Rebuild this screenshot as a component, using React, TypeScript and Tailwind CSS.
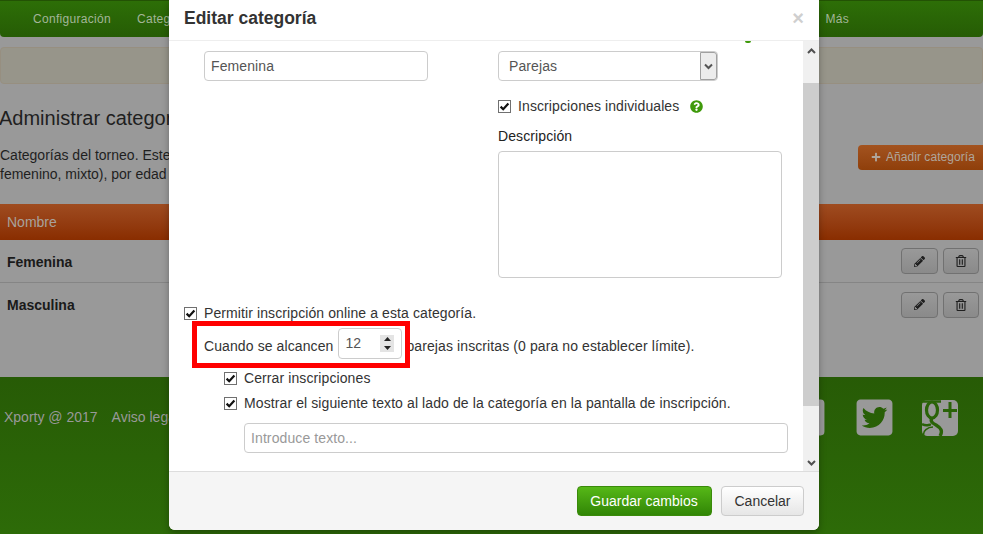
import React from "react";
import { FaTwitterSquare, FaFacebookSquare, FaPencilAlt, FaRegTrashAlt, FaPlus, FaQuestionCircle } from "react-icons/fa";

const font = { fontFamily: '"Liberation Sans", Arial, sans-serif' };

function Check() {
  return (
    <span className="flex h-[13px] w-[13px] shrink-0 items-center justify-center border border-[#707070] bg-white">
      <svg width="11" height="11" viewBox="0 0 11 11">
        <path d="M1.6 5.6 L4.2 8.2 L9.4 2.4" fill="none" stroke="#111" strokeWidth="2.2" />
      </svg>
    </span>
  );
}

function GooglePlusIcon() {
  return (
    <svg width="36" height="36" viewBox="0 0 36 36">
      <rect x="0" y="0" width="36" height="36" rx="5" fill="#999" />
      <g fill="none" stroke="#2a6308">
        <path d="M0 1.5 H19" strokeWidth="2.5" />
        <ellipse cx="10" cy="10" rx="5.5" ry="8" strokeWidth="3.2" />
        <path d="M10 18 C8 21 10 23 14 25 C19 28 21 31 18 36" strokeWidth="3.4" />
        <path d="M0 24 C5 27 7 24 9 25" strokeWidth="2.6" />
        <path d="M2 36 C0 31 6 27 11 27" strokeWidth="1.6" />
        <path d="M21 10.5 H35 M28 2 V18" strokeWidth="3" />
      </g>
    </svg>
  );
}

function ActionButtons() {
  return (
    <div className="flex gap-[5px]">
      <button className="flex h-[26px] w-[37px] items-center justify-center rounded-[4px] border border-[#717171] bg-gradient-to-b from-[#999] to-[#8a8a8a] text-[11px] text-[#1f1f1f]">
        <FaPencilAlt />
      </button>
      <button className="flex h-[26px] w-[36px] items-center justify-center rounded-[4px] border border-[#717171] bg-gradient-to-b from-[#999] to-[#8a8a8a] text-[12px] text-[#1f1f1f]">
        <FaRegTrashAlt />
      </button>
    </div>
  );
}

function Background() {
  return (
    <div className="flex h-[534px] w-[983px] flex-col overflow-hidden bg-[#999] text-[14px] text-[#1f1f1f]">
      <nav className="flex h-[37px] shrink-0 items-center rounded-b-[4px] border-t border-[#235204] bg-gradient-to-b from-[#2d6e07] to-[#265c05] pl-[33px] text-[12px] tracking-[0.3px] text-[#a3b598]">
        <span>Configuración</span>
        <span className="ml-[26px] whitespace-nowrap">Categ</span>
        <span className="ml-auto mr-[134px]">Más</span>
      </nav>
      <div className="mt-[10px] h-[37px] shrink-0 rounded-[4px] border border-[#978f80] bg-[#97958a]" />
      <div className="flex h-[120px] shrink-0 items-start justify-between">
        <div className="pl-0">
          <h1 className="ml-[-1px] mt-[22px] text-[20px] leading-[24px] text-[#1f1f1f]">Administrar categorías</h1>
          <p className="mt-[16px] leading-[19px]">
            Categorías del torneo. Este
            <br />
            femenino, mixto), por edad
          </p>
        </div>
        <button className="mr-[-4px] mt-[61px] flex h-[25px] w-[129px] items-center gap-[5px] rounded-[4px] bg-gradient-to-b from-[#a3531f] to-[#8f3f0a] pb-[1px] pl-[13px] text-[12px] tracking-[0.05px] text-[#b0a69c]">
          <FaPlus className="text-[10px]" />
          Añadir categoría
        </button>
      </div>
      <div className="flex h-[36px] shrink-0 items-center bg-gradient-to-b from-[#9f4c20] to-[#892d00] pl-[7px] text-[#a8a29c]">
        Nombre
      </div>
      <div className="flex h-[43px] shrink-0 items-center justify-between border-b border-[#858585] pl-[7px] pr-[4px] font-bold text-[#1a1a1a]">
        <span className="pt-[2px]">Femenina</span>
        <ActionButtons />
      </div>
      <div className="flex h-[43px] shrink-0 items-center justify-between pl-[7px] pr-[4px] font-bold text-[#1a1a1a]">
        <span className="pt-[2px]">Masculina</span>
        <ActionButtons />
      </div>
      <footer className="mt-[51px] flex flex-1 items-start justify-between bg-gradient-to-b from-[#275b06] to-[#2d6b08] pl-[4px] pr-[25px] text-[#999]">
        <div className="mt-[30px] flex gap-[14px]">
          <span>Xporty @ 2017</span>
          <span>Aviso legal</span>
        </div>
        <div className="mt-[23px] flex items-start gap-[27px] text-[41px] leading-none text-[#999]">
          <FaFacebookSquare className="mt-[-3px]" />
          <FaTwitterSquare className="mt-[-3px]" />
          <GooglePlusIcon />
        </div>
      </footer>
    </div>
  );
}

function Modal() {
  return (
    <div className="absolute left-[169px] top-0 flex h-[530px] w-[650px] flex-col rounded-b-[6px] bg-white text-[14px] text-[#333] shadow-[0_3px_7px_rgba(0,0,0,0.3)]">
      <header className="flex h-[41px] shrink-0 items-start justify-between border-b border-[#eee] pl-[15px] pr-[15px] pt-[7px]">
        <h3 className="text-[17.5px] font-bold leading-[22px] text-[#333]">Editar categoría</h3>
        <span className="text-[20px] font-bold leading-[22px] text-[#cfcfcf]">×</span>
      </header>
      <div className="relative flex min-h-0 flex-1 tracking-[0.1px]">
        <div className="min-w-0 flex-1 pl-[15px] pt-[10px]">
          <div className="flex">
            <div className="w-[314px] pl-[20px]">
              <div className="flex h-[30px] w-[224px] items-center rounded-[4px] border border-[#ccc] pl-[6px] text-[#555]">Femenina</div>
            </div>
            <div>
              <div className="flex h-[30px] w-[220px] items-center justify-between rounded-[4px] border border-[#ccc] pl-[10px] text-[#555]">
                Parejas
                <span className="flex h-[28px] w-[17px] items-center justify-center rounded-r-[3px] border border-[#a0a0a0] bg-[#ececec]">
                  <svg width="9" height="7" viewBox="0 0 9 7"><path d="M1 1.5 L4.5 5 L8 1.5" fill="none" stroke="#555" strokeWidth="2" /></svg>
                </span>
              </div>
              <label className="mt-[17px] flex h-[16px] items-center gap-[7px]">
                <Check />
                Inscripciones individuales
                <FaQuestionCircle className="ml-[4px] text-[13px] text-[#3f9a0b]" />
              </label>
              <div className="mt-[14px] h-[16px] leading-[16px] text-[#222]">Descripción</div>
              <div className="mt-[7px] h-[127px] w-[284px] rounded-[4px] border border-[#ccc]" />
            </div>
          </div>
          <label className="mt-[27px] flex h-[16px] items-center gap-[7px]">
            <Check />
            Permitir inscripción online a esta categoría.
          </label>
          <div className="mt-[7px] flex h-[31px] items-start pl-[20px]">
            <span className="pt-[8px] leading-[20px]">Cuando se alcancen</span>
            <span className="ml-[5px] mr-[4px] flex h-[31px] w-[64px] items-center justify-between rounded-[4px] border border-[#ccc] pl-[6px] pr-[7px] text-[#555]">
              12
              <span className="flex h-[17px] w-[14px] flex-col items-center justify-between bg-[#e4e4e4] py-[2px]">
                <svg width="7" height="4" viewBox="0 0 7 4"><path d="M3.5 0 L7 4 L0 4 Z" fill="#222" /></svg>
                <svg width="7" height="4" viewBox="0 0 7 4"><path d="M0 0 L7 0 L3.5 4 Z" fill="#222" /></svg>
              </span>
            </span>
            <span className="pt-[8px] leading-[20px]">parejas inscritas (0 para no establecer límite).</span>
          </div>
          <label className="ml-[40px] mt-[11px] flex h-[16px] items-center gap-[7px]">
            <Check />
            Cerrar inscripciones
          </label>
          <label className="ml-[40px] mt-[9px] flex h-[16px] items-center gap-[7px]">
            <Check />
            Mostrar el siguiente texto al lado de la categoría en la pantalla de inscripción.
          </label>
          <div className="ml-[60px] mt-[12px] flex h-[30px] w-[544px] items-center rounded-[4px] border border-[#ccc] pl-[6px] text-[#999]">Introduce texto...</div>
        </div>
        <div className="flex w-[16px] shrink-0 flex-col bg-[#f0f0f0]">
          <div className="flex h-[42px] justify-center pt-[7px]">
            <svg width="9" height="6" viewBox="0 0 9 6"><path d="M1 5 L4.5 1.5 L8 5" fill="none" stroke="#505050" strokeWidth="2" /></svg>
          </div>
          <div className="h-[323px] bg-[#cdcdcd]" />
          <div className="flex flex-1 items-end justify-center pb-[5px]">
            <svg width="9" height="6" viewBox="0 0 9 6"><path d="M1 1 L4.5 4.5 L8 1" fill="none" stroke="#505050" strokeWidth="2" /></svg>
          </div>
        </div>
        <div className="absolute left-[576px] top-0 h-[2px] w-[6px] rounded-b-[3px] bg-[#3f9a0b]" />
        <div className="absolute left-[23px] top-[280px] h-[47px] w-[218px] border-[5px] border-[#ff0000]" />
      </div>
      <footer className="flex h-[59px] shrink-0 items-center justify-end gap-[9px] rounded-b-[6px] border-t border-[#ddd] bg-[#f5f5f5] pr-[15px]">
        <button className="h-[30px] w-[135px] rounded-[4px] border border-[#3a8a0a] bg-gradient-to-b from-[#56b817] to-[#318606] pr-[1px] text-white">Guardar cambios</button>
        <button className="h-[30px] w-[83px] rounded-[4px] border border-[#ccc] bg-gradient-to-b from-white to-[#e6e6e6] text-[#333]">Cancelar</button>
      </footer>
    </div>
  );
}

export default function App() {
  return (
    <div style={font} className="relative h-[534px] w-[983px] overflow-hidden">
      <Background />
      <Modal />
    </div>
  );
}
